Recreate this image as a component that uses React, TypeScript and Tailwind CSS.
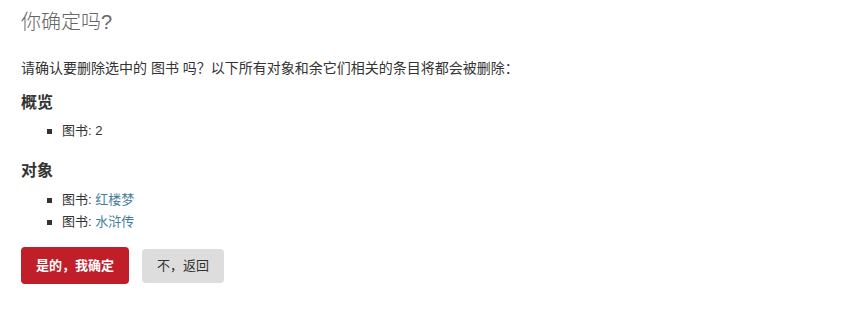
export default function App() {
  const font = {
    fontFamily:
      '"Liberation Sans", "Noto Sans CJK SC", sans-serif',
  };
  return (
    <div className="min-h-[311px] w-[855px] bg-white pl-[21px] text-[#333]" style={font}>
      {/* Title */}
      <h1 className="pt-[10px] text-[20px] font-light leading-[24px] text-[#666]">你确定吗?</h1>

      <p className="mt-[25px] text-[14px] leading-[18px]">
        请确认要删除选中的 图书 吗？以下所有对象和余它们相关的条目将都会被删除：
      </p>

      <h2 className="mt-[16px] text-[16px] font-bold leading-[20px]">概览</h2>
      <ul className="mt-[7px] pl-[26px] text-[13px]">
        <li className="flex h-[22px] items-center">
          <span className="mr-[10px] h-[5px] w-[5px] bg-[#333]" />
          图书: 2
        </li>
      </ul>

      <h2 className="mt-[19px] text-[16px] font-bold leading-[20px]">对象</h2>
      <ul className="mt-[8px] pl-[26px] text-[13px]">
        <li className="flex h-[22px] items-center">
          <span className="mr-[10px] h-[5px] w-[5px] bg-[#333]" />
          图书:&nbsp;<a className="text-[#447e9b]">红楼梦</a>
        </li>
        <li className="flex h-[22px] items-center">
          <span className="mr-[10px] h-[5px] w-[5px] bg-[#333]" />
          图书:&nbsp;<a className="text-[#447e9b]">水浒传</a>
        </li>
      </ul>

      {/* Actions */}
      <div className="mt-[14px] flex items-center gap-[13px]">
        <button className="h-[37px] w-[108px] rounded-[4px] bg-[#c01f2a] text-[13px] font-bold text-white">
          是的，我确定
        </button>
        <a className="flex h-[34px] w-[82px] items-center justify-center rounded-[4px] bg-[#ddd] text-[13px] text-[#333]">
          不，返回
        </a>
      </div>
    </div>
  );
}
